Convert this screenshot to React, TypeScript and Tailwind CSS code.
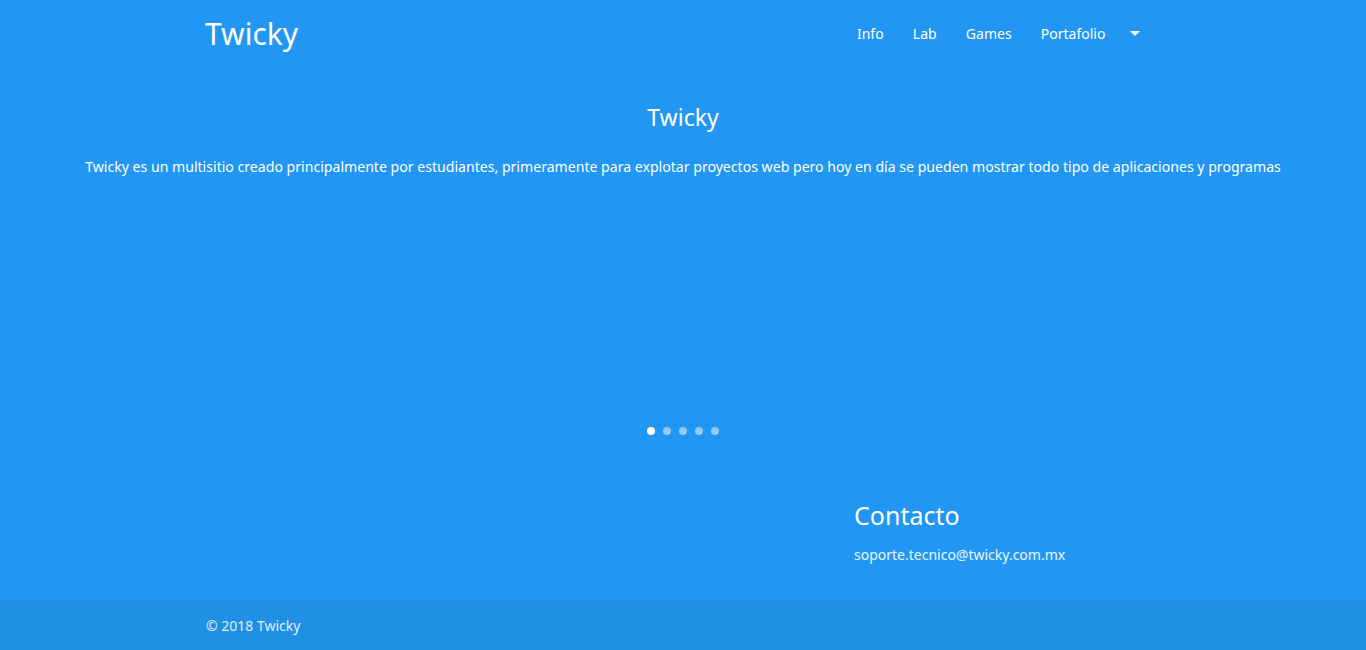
export default function App() {
  const font = { fontFamily: '"Noto Sans", "Open Sans", sans-serif' };
  return (
    <div className="min-h-[650px] w-full bg-[#2196f3] text-white flex flex-col" style={font}>
      <nav className="h-[67px] w-[960px] mx-auto flex items-center justify-between">
        <a className="text-[30px] leading-none ml-[2px]">Twicky</a>
        <ul className="flex items-center mr-[23px] text-[14px]">
          <li className="px-[14.6px]">Info</li>
          <li className="px-[14.6px]">Lab</li>
          <li className="px-[14.6px]">Games</li>
          <li className="px-[14.6px]">Portafolio</li>
          <li className="pl-[10px]">
            <span className="block w-0 h-0 border-l-[5px] border-r-[5px] border-t-[5px] border-l-transparent border-r-transparent border-t-white" />
          </li>
        </ul>
      </nav>
      <section className="text-center">
        <h1 className="mt-[34px] text-[23px] leading-[32px]">Twicky</h1>
        <p className="mt-[24px] text-[14.1px] leading-[20px]">
          Twicky es un multisitio creado principalmente por estudiantes, primeramente para explotar proyectos web pero hoy en día se pueden mostrar todo tipo de aplicaciones y programas
        </p>
        <div className="mt-[250px] flex justify-center gap-[8px]">
          <span className="w-[8px] h-[8px] rounded-full bg-white" />
          <span className="w-[8px] h-[8px] rounded-full bg-white/50" />
          <span className="w-[8px] h-[8px] rounded-full bg-white/50" />
          <span className="w-[8px] h-[8px] rounded-full bg-white/50" />
          <span className="w-[8px] h-[8px] rounded-full bg-white/50" />
        </div>
      </section>
      <section className="w-[960px] mx-auto flex">
        <div className="ml-[651px] mt-[63px]">
          <h2 className="text-[25px] leading-[34px]">Contacto</h2>
          <p className="mt-[13px] text-[14px] leading-[20px] text-white/90">soporte.tecnico@twicky.com.mx</p>
        </div>
      </section>
      <footer className="mt-auto h-[50px] bg-[#208fe4]">
        <div className="w-[960px] mx-auto h-full flex items-center">
          <span className="ml-[3px] text-[14px] text-white/85">© 2018 Twicky</span>
        </div>
      </footer>
    </div>
  );
}
